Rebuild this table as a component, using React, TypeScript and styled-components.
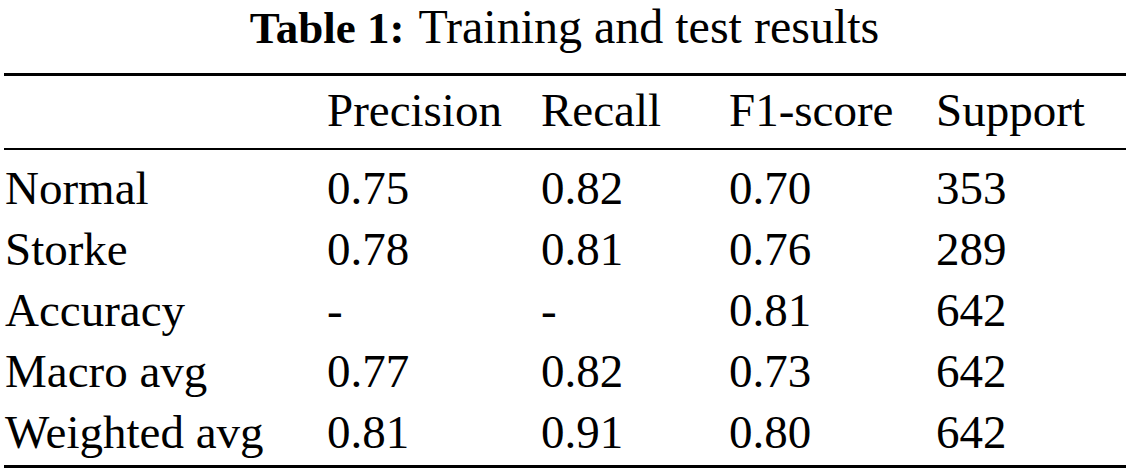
import React from "react";
import styled, { createGlobalStyle } from "styled-components";

const GlobalStyle = createGlobalStyle`
  html, body {
    margin: 0;
    padding: 0;
    background: #ffffff;
  }
  body {
    font-family: "Liberation Serif", "Times New Roman", serif;
    color: #000000;
  }
`;

const Page = styled.div`
  width: 1129px;
  height: 475px;
  overflow: hidden;
  background: #ffffff;
`;

const Caption = styled.div`
  display: flex;
  justify-content: center;
  align-items: baseline;
  height: 53px;
  font-size: 48px;
  line-height: 53px;
  white-space: nowrap;
`;

const CaptionLabel = styled.span`
  font-weight: bold;
  font-size: 45px;
  margin-right: 14px;
`;

const TableBox = styled.div`
  margin: 20px 3px 0 4px;
`;

const Rule = styled.div<{ $weight: number }>`
  height: ${(p) => p.$weight}px;
  background: #000000;
`;

const Grid = styled.div<{ $padTop: number; $padBottom: number }>`
  display: grid;
  grid-template-columns: 322px 214px 188px 207px 1fr;
  padding: ${(p) => p.$padTop}px 0 ${(p) => p.$padBottom}px 1px;
  font-size: 47px;
  line-height: 61px;
  white-space: nowrap;
`;

const Cell = styled.div`
  text-align: left;
`;

const header = ["", "Precision", "Recall", "F1-score", "Support"];

const rows: string[][] = [
  ["Normal", "0.75", "0.82", "0.70", "353"],
  ["Storke", "0.78", "0.81", "0.76", "289"],
  ["Accuracy", "-", "-", "0.81", "642"],
  ["Macro avg", "0.77", "0.82", "0.73", "642"],
  ["Weighted avg", "0.81", "0.91", "0.80", "642"],
];

export default function App() {
  return (
    <Page>
      <GlobalStyle />
      <Caption>
        <CaptionLabel>Table 1:</CaptionLabel>
        <span>Training and test results</span>
      </Caption>
      <TableBox>
        <Rule $weight={3} />
        <Grid $padTop={4} $padBottom={7}>
          {header.map((h, i) => (
            <Cell key={i}>{h}</Cell>
          ))}
        </Grid>
        <Rule $weight={2} />
        <Grid $padTop={8} $padBottom={2}>
          {rows.map((r, ri) =>
            r.map((c, ci) => <Cell key={`${ri}-${ci}`}>{c}</Cell>)
          )}
        </Grid>
        <Rule $weight={3} />
      </TableBox>
    </Page>
  );
}
